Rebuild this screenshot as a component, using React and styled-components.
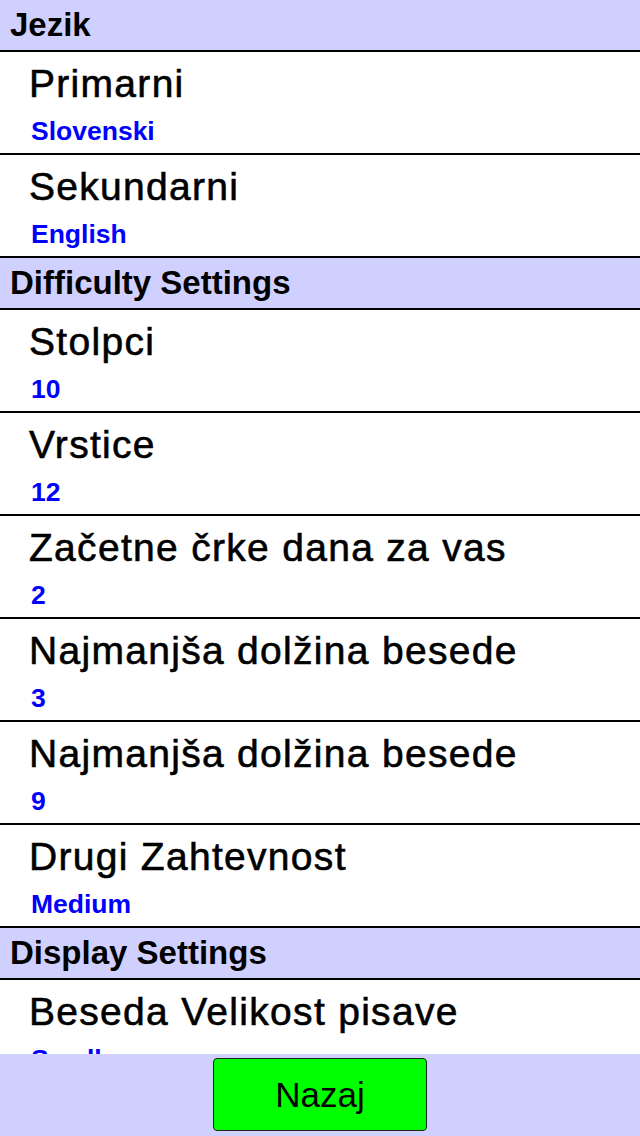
import React from "react";
import styled, { createGlobalStyle } from "styled-components";

const Global = createGlobalStyle`
  html, body { margin: 0; padding: 0; background: #ffffff; }
  body { font-family: "Liberation Sans", Arial, sans-serif; }
  * { box-sizing: border-box; }
`;

const Screen = styled.div`
  width: 640px;
  height: 1136px;
  display: flex;
  flex-direction: column;
  overflow: hidden;
  background: #ffffff;
`;

const List = styled.div`
  flex: 1;
  overflow: hidden;
  display: flex;
  flex-direction: column;
`;

const SectionHeader = styled.div`
  flex: 0 0 auto;
  height: 52px;
  padding-left: 10px;
  background: #d0d0ff;
  border-bottom: 2px solid #000000;
  font-size: 33px;
  font-weight: bold;
  line-height: 50px;
  color: #000000;
`;

const Row = styled.div`
  flex: 0 0 auto;
  height: 103px;
  border-bottom: 2px solid #000000;
  display: flex;
  flex-direction: column;
  padding-top: 10px;
`;

const Title = styled.div`
  padding-left: 29px;
  font-size: 39px;
  line-height: 44px;
  letter-spacing: 1.3px;
  color: #000000;
  -webkit-text-stroke: 0.6px #000000;
  white-space: nowrap;
`;

const Value = styled.div`
  margin-top: 10px;
  padding-left: 31px;
  font-size: 26.5px;
  font-weight: bold;
  line-height: 30px;
  color: #0000ff;
  white-space: nowrap;
`;

const Footer = styled.div`
  flex: 0 0 82px;
  background: #d0d0ff;
  display: flex;
  justify-content: center;
  padding-top: 4px;
`;

const Button = styled.button`
  width: 214px;
  height: 73px;
  background: #00ff00;
  border: 1px solid #222222;
  border-radius: 4px;
  font-family: "Liberation Sans", Arial, sans-serif;
  font-size: 35px;
  color: #000000;
  padding: 0;
  cursor: pointer;
`;

const sections = [
  {
    title: "Jezik",
    items: [
      ["Primarni", "Slovenski"],
      ["Sekundarni", "English"],
    ],
  },
  {
    title: "Difficulty Settings",
    items: [
      ["Stolpci", "10"],
      ["Vrstice", "12"],
      ["Začetne črke dana za vas", "2"],
      ["Najmanjša dolžina besede", "3"],
      ["Najmanjša dolžina besede", "9"],
      ["Drugi Zahtevnost", "Medium"],
    ],
  },
  {
    title: "Display Settings",
    items: [
      ["Beseda Velikost pisave", "Small"],
      ["Črka Velikost pisave", "Medium"],
    ],
  },
];

export default function App() {
  return (
    <>
      <Global />
      <Screen>
        <List>
          {sections.map((s) => (
            <React.Fragment key={s.title}>
              <SectionHeader>{s.title}</SectionHeader>
              {s.items.map(([t, v], i) => (
                <Row key={i}>
                  <Title>{t}</Title>
                  <Value>{v}</Value>
                </Row>
              ))}
            </React.Fragment>
          ))}
        </List>
        <Footer>
          <Button>Nazaj</Button>
        </Footer>
      </Screen>
    </>
  );
}
